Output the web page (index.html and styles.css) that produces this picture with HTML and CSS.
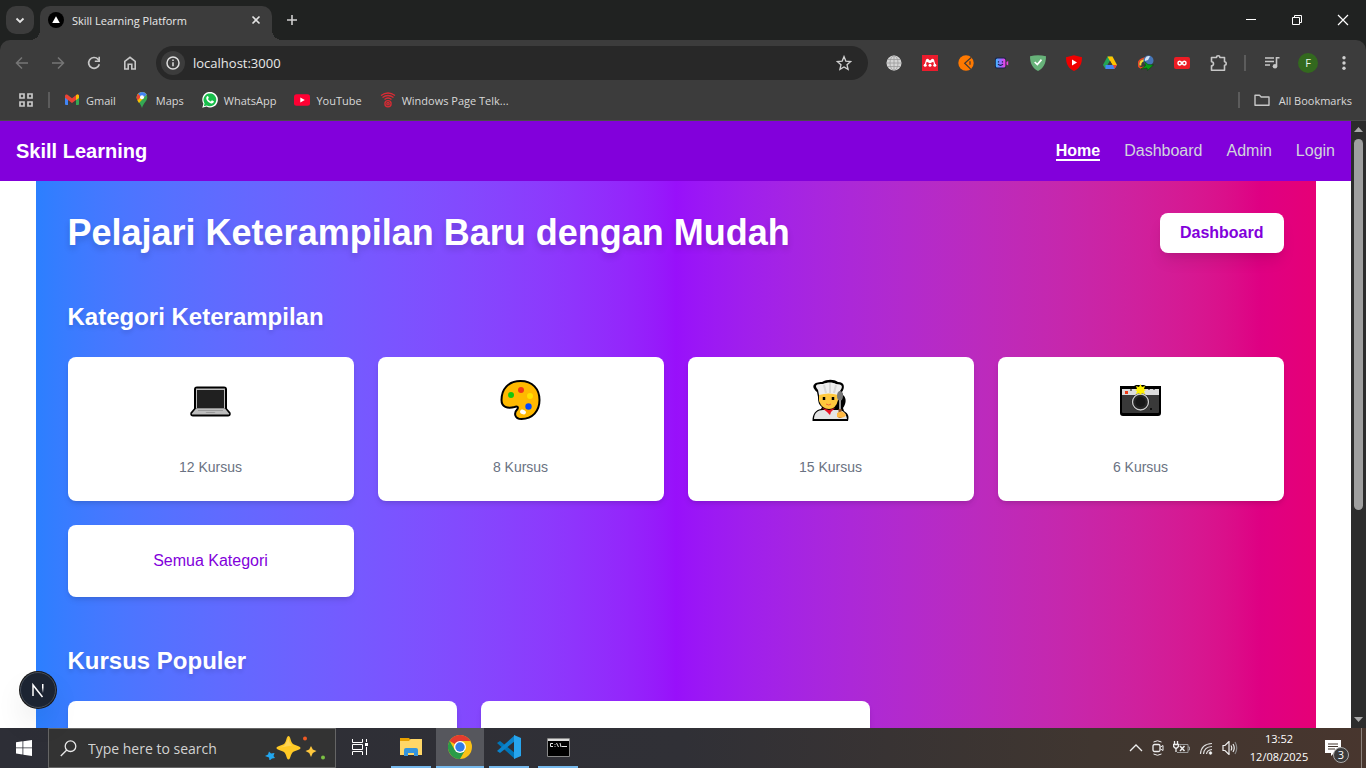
FILE: index.html
```html
<!DOCTYPE html>
<html lang="id">
<head>
<meta charset="utf-8">
<title>Skill Learning Platform</title>
<link rel="stylesheet" href="styles.css">
</head>
<body>
<div class="screen">
  <header class="browser">
    <div class="tabstrip">
      <button class="tab-search" aria-label="Search tabs"><svg width="12" height="12" viewBox="0 0 12 12"><path d="M2.500 4.500 6 8l3.500-3.500" fill="none" stroke="#e3e3e3" stroke-width="1.800"/></svg></button>
      <div class="tab">
        <svg width="16" height="16" viewBox="0 0 16 16"><circle cx="8" cy="8" r="8" fill="#000"/><path d="M8 4.300 11.800 11H4.200z" fill="#fff"/></svg>
        <span class="tab-title">Skill Learning Platform</span>
        <button class="plain" aria-label="Close tab"><svg width="16" height="16" viewBox="0 0 16 16"><path d="m4.500 4.500 7 7m0-7-7 7" stroke="#e3e3e3" stroke-width="1.600"/></svg></button>
      </div>
      <button class="plain new-tab" aria-label="New tab"><svg width="16" height="16" viewBox="0 0 16 16"><path d="M8 3v10M3 8h10" stroke="#d0d0d0" stroke-width="1.600"/></svg></button>
      <div class="window-controls">
        <button aria-label="Minimize"><svg width="12" height="12" viewBox="0 0 12 12"><path d="M1 5.500h10" stroke="#fff"/></svg></button>
        <button aria-label="Restore"><svg width="12" height="12" viewBox="0 0 12 12"><path d="M1.500 3.500h7v7h-7zM3.500 3.500v-2h7v7h-2" fill="none" stroke="#fff"/></svg></button>
        <button aria-label="Close"><svg width="12" height="12" viewBox="0 0 12 12"><path d="m1 1 10 10M11 1 1 11" stroke="#fff" stroke-width="1.200"/></svg></button>
      </div>
    </div>
    <div class="chrome-bars">
      <div class="toolbar">
        <button aria-label="Back"><svg width="16" height="16" viewBox="0 0 16 16"><path d="M14 8H3M8 2.500 2.500 8 8 13.500" fill="none" stroke="#767676" stroke-width="1.500"/></svg></button>
        <button aria-label="Forward"><svg width="16" height="16" viewBox="0 0 16 16"><path d="M2 8h11M8 2.500 13.500 8 8 13.500" fill="none" stroke="#767676" stroke-width="1.500"/></svg></button>
        <button aria-label="Reload"><svg width="16" height="16" viewBox="0 0 16 16"><path d="M13.300 9.200A5.400 5.400 0 1 1 12 4.200l1 1.200" fill="none" stroke="#c7c7c7" stroke-width="1.700"/><path d="M14 1.800V7H8.800V5.500h3.600V1.800z" fill="#c7c7c7"/></svg></button>
        <button aria-label="Home"><svg width="16" height="16" viewBox="0 0 16 16"><path d="M2.800 14V6.300L8 2.300l5.200 4V14H9.800V9.200H6.200V14z" fill="none" stroke="#c7c7c7" stroke-width="1.600"/></svg></button>
        <div class="omnibox">
          <button class="site-info" aria-label="Site information"><svg width="16" height="16" viewBox="0 0 16 16"><circle cx="8" cy="8" r="6" fill="none" stroke="#dedede" stroke-width="1.500"/><path d="M8 7.200v4M8 4.600v1.500" stroke="#dedede" stroke-width="1.500"/></svg></button>
          <input type="text" aria-label="Address" value="localhost:3000">
          <button class="plain" aria-label="Bookmark this page"><svg width="16" height="16" viewBox="0 0 16 16"><path d="m8 1.600 1.800 4.500 4.900.4-3.700 3.200 1.100 4.700L8 11.900l-4.100 2.500L5 9.700 1.300 6.500l4.900-.4z" fill="none" stroke="#d0d0d0" stroke-width="1.300"/></svg></button>
        </div>
        <button aria-label="Web extension"><svg width="16" height="16" viewBox="0 0 16 16"><circle cx="8" cy="8" r="7.500" fill="#d4d4d4"/><path d="M8 .5v15M.5 8h15M2 4.500h12M2 11.500h12" stroke="#9a9a9a" stroke-width=".8"/><ellipse cx="8" cy="8" rx="4" ry="7.300" fill="none" stroke="#9a9a9a" stroke-width=".8"/></svg></button>
        <button aria-label="Mendeley"><svg width="16" height="16" viewBox="0 0 16 16"><path d="M0 0h16v16H0z" fill="#eb1c2d"/><path d="M3 10.300C3.800 9 3.500 6 5 5.500M13 10.300C12.200 9 12.500 6 11 5.500M6.200 6l1.300 2M9.800 6 8.500 8" fill="none" stroke="#fff" stroke-width="1.300"/><circle cx="5.500" cy="5.500" r="1.700" fill="#fff"/><circle cx="10.500" cy="5.500" r="1.700" fill="#fff"/><circle cx="8" cy="6.500" r="1.500" fill="#fff"/><circle cx="3.200" cy="10.300" r="1.500" fill="#fff"/><circle cx="8" cy="10.300" r="1.500" fill="#fff"/><circle cx="12.800" cy="10.300" r="1.500" fill="#fff"/></svg></button>
        <button aria-label="Code extension"><svg width="16" height="16" viewBox="0 0 16 16"><circle cx="8" cy="8" r="7.700" fill="#ff7900"/><path d="m13.500 2.200-6.800 6 6 6M12 6.300v3.500" fill="none" stroke="#403a35" stroke-width="1.200"/></svg></button>
        <button aria-label="Recorder"><svg width="16" height="16" viewBox="0 0 16 16"><defs><linearGradient id="rec"><stop stop-color="#3dbdff"/><stop offset=".6" stop-color="#a561ff"/><stop offset="1" stop-color="#f93ed6"/></linearGradient></defs><rect x="1" y="2.500" width="11" height="11" rx="2" fill="#17204d"/><rect x="1.800" y="3.500" width="9.600" height="9" rx="1.500" fill="url(#rec)"/><path d="m12.500 7 1.700-1v4.500l-1.700-1z" fill="#e847db"/><path d="M4.500 6.200v1.300M8.500 6.200v1.300M4 9.200q2.500 2.500 5 0" fill="none" stroke="#17204d" stroke-width="1.200"/></svg></button>
        <button aria-label="AdGuard"><svg width="16" height="16" viewBox="0 0 16 16"><path d="M0 1.300Q8-1 16 1.300C16 9 13 13.500 8 16 3 13.500 0 9 0 1.300z" fill="#67b279"/><path d="m4.700 7 2.600 2.600 4.200-5" fill="none" stroke="#fff" stroke-width="1.700"/></svg></button>
        <button aria-label="YouTube blocker"><svg width="16" height="16" viewBox="0 0 16 16"><path d="M0 2.200 8 .3l8 1.900C16 9 13.500 13.500 8 16 2.500 13.500 0 9 0 2.200z" fill="#f00000"/><path d="m6 4.500 5 3-5 3z" fill="#fff"/></svg></button>
        <button aria-label="Google Drive"><svg width="16" height="16" viewBox="0 0 16 16"><path d="M5.500 1.500h5L3.500 14 1 10z" fill="#23a455"/><path d="M5.500 1.500h5L15 10h-4.800z" fill="#ffc400"/><path d="M3.500 10H15l-2.500 4h-9z" fill="#4285f4"/><path d="m8 5.800 2.600 4.300H5.500z" fill="#3c3c3c"/><path d="M11 10h4l-2.500 4z" fill="#ea4335"/></svg></button>
        <button aria-label="Download manager"><svg width="16" height="16" viewBox="0 0 16 16"><path d="M7 3C2 4 0 7 .5 10.500 1 13 4 13.500 6 12" fill="none" stroke="#eb4926" stroke-width="1.600"/><path d="M7 5C3.500 5.500 2 8 2.300 10.500" fill="none" stroke="#f9dc36" stroke-width="2"/><circle cx="10.500" cy="5.500" r="5" fill="#4676b8"/><path d="M7 3.500Q9 .5 12 1.200L10 5 7 6z" fill="#d3e4f3"/><path d="m6.500 6.500 3.500 3 5.500.5-6 5.500-.5-2.500-6 1 4.500-3.500z" fill="#079c16" stroke="#073c08" stroke-width=".5"/></svg></button>
        <button aria-label="Loop extension"><svg width="16" height="16" viewBox="0 0 16 16"><rect y="2" width="16" height="12" rx="2" fill="#ed1c24"/><path d="M8 8C6.500 5.500 4 5.500 4 8s2.500 2.500 4 0 4-2.500 4 0-2.500 2.500-4 0z" fill="none" stroke="#fff" stroke-width="1.500"/></svg></button>
        <button aria-label="Extensions"><svg width="18" height="18" viewBox="0 0 18 18"><path d="M2.500 3.500h5a1.700 1.700 0 0 1 3.400 0h4.600v4.300a1.700 1.700 0 0 1 0 3.400v5h-13v-4.500a2 2 0 0 0 0-4z" fill="none" stroke="#c7c7c7" stroke-width="1.600" stroke-linejoin="round"/></svg></button>
        <span class="divider toolbar-divider"></span>
        <button aria-label="Media controls"><svg width="16" height="16" viewBox="0 0 16 16"><path d="M1 3h9M1 6.500h9M1 10h5M12.500 11V2.800h3" fill="none" stroke="#c7c7c7" stroke-width="1.600"/><circle cx="11" cy="11.200" r="2.300" fill="#c7c7c7"/></svg></button>
        <button aria-label="Profile"><span class="avatar">F</span></button>
        <button aria-label="Menu"><svg width="16" height="16" viewBox="0 0 16 16" fill="#d0d0d0"><circle cx="8" cy="2.700" r="1.700"/><circle cx="8" cy="8" r="1.700"/><circle cx="8" cy="13.300" r="1.700"/></svg></button>
      </div>
      <nav class="bookmarks" aria-label="Bookmarks">
        <button class="plain" aria-label="Apps"><svg width="16" height="16" viewBox="0 0 16 16" fill="none" stroke="#c7c7c7" stroke-width="1.700"><path d="M2 2h4v4H2zM10 2h4v4h-4zM2 10h4v4H2zM10 10h4v4h-4z"/></svg></button>
        <span class="divider"></span>
        <div class="bookmark-list">
          <a href="#"><svg width="16" height="16" viewBox="0 0 16 16"><path d="M1 3.500 4 5.800V13H2a1 1 0 0 1-1-1z" fill="#4285f4"/><path d="M15 3.500 12 5.800V13h2a1 1 0 0 0 1-1z" fill="#34a853"/><path d="M1 4c0-1.500 1.500-2 2.500-1.200L8 6.200l4.500-3.400C13.500 2 15 2.500 15 4v1.800L8 11 1 5.800z" fill="#ea4335"/><path d="M12 3.200c1.200-1.200 3-.6 3 .8v2l-3 2z" fill="#fbbc04"/></svg>Gmail</a>
          <a href="#"><svg width="16" height="16" viewBox="0 0 16 16"><path d="M8 0a5.300 5.300 0 0 1 5.300 5.300C13.300 9 9.500 11 8 16 6.500 11 2.700 9 2.700 5.300A5.300 5.300 0 0 1 8 0z" fill="#34a853"/><path d="M2.700 5.300C2.700 1.500 6 0 8 0c2.500 0 4 1.300 4.700 2.700L5 11C3.500 9 2.700 7 2.700 5.300z" fill="#fbbc04"/><path d="M8 0c2.500 0 4 1.300 4.700 2.700L8 7 4 2C5 .7 6.500 0 8 0z" fill="#4285f4"/><path d="m4 2 3 2.500-3.500 4C2 5.500 2.700 3.500 4 2z" fill="#ea4335"/><circle cx="8" cy="5.300" r="2" fill="#fff"/></svg>Maps</a>
          <a href="#"><svg width="16" height="16" viewBox="0 0 16 16"><path d="m.3 15.700 1.100-4A7.800 7.800 0 1 1 4.500 14.600z" fill="#fff"/><path d="m1.800 14.200.8-2.800a6.400 6.400 0 1 1 2.200 2z" fill="#18bd4b"/><path d="M5.200 4.200c.8-.6 1.300.7 1.600 1.600L6 6.900c.7 1.300 1.700 2.100 2.900 2.600l1-1.200 2 1c-.2 3-3.500 2.400-5.500.6C4.300 8 3.500 5.500 5.200 4.200z" fill="#fff"/></svg>WhatsApp</a>
          <a href="#"><svg width="16" height="16" viewBox="0 0 16 16"><rect y="2.300" width="16" height="11.400" rx="2.500" fill="#ff0033"/><path d="m6.300 5.500 4.500 2.500-4.500 2.500z" fill="#fff"/></svg>YouTube</a>
          <a href="#"><svg width="16" height="16" viewBox="0 0 16 16" fill="none" stroke="#d92b34" stroke-width="1.300"><path d="M1 3.500Q8-1.500 15 3.500M2.500 5.500q5.500-4 11 0M4.500 7.500q3.500-3 7 0"/><circle cx="8" cy="11.700" r="3.100"/><circle cx="8" cy="11.700" r="1.200"/></svg>Windows Page Telk...</a>
        </div>
        <span class="divider"></span>
        <a class="all-bookmarks" href="#"><svg width="16" height="16" viewBox="0 0 16 16"><path d="M1 3.200h4.500L7.200 5H15v8.200H1z" fill="none" stroke="#c7c7c7" stroke-width="1.400" stroke-linejoin="round"/></svg>All Bookmarks</a>
      </nav>
    </div>
  </header>

  <div class="viewport">
    <div class="page">
      <nav class="site-nav">
        <a class="brand" href="#">Skill Learning</a>
        <div class="site-links"><a class="active" href="#">Home</a><a href="#">Dashboard</a><a href="#">Admin</a><a href="#">Login</a></div>
      </nav>
      <main class="content">
        <div class="hero"><h1>Pelajari Keterampilan Baru dengan Mudah</h1><a class="cta" href="#">Dashboard</a></div>
        <section>
          <h2>Kategori Keterampilan</h2>
          <div class="categories">
            <a class="card" href="#">
              <svg width="42" height="42" viewBox="0 -1 42 42"><path d="M7 6.500h27q3 0 3 3v19l3.500 4q1 4-2.500 4H3q-3.500 0-2.500-4l3.500-4v-19q0-3 3-3z" fill="#000"/><path d="M6 8.500h29v20H6z" fill="#bdbdbd"/><path d="M7 10h27v18H7z" fill="#202020"/><path d="M6 28.500h29l4 5v1H2v-1z" fill="#bdbdbd"/><path d="M8 30h25v1H8z" fill="#999"/><path d="M16.500 32h8l1 1h-10z" fill="#999"/></svg>
              <span>12 Kursus</span></a>
            <a class="card" href="#">
              <svg width="42" height="42" viewBox="0 0 42 42"><path d="M20.500 2c12 0 19 8 19 19s-7 19-18 19c-7 0-8-6-4-10 1-2 0-3-3-2-7 2-13 0-13-7C1.500 10 8.500 2 20.500 2z" fill="#ffb900" stroke="#000" stroke-width="2"/><circle cx="11" cy="16" r="3" fill="#16c60c"/><circle cx="21" cy="11" r="3" fill="#f03a17"/><circle cx="30" cy="17" r="3" fill="#ffe000"/><circle cx="28.500" cy="27.500" r="3.200" fill="#0047ff"/><ellipse cx="23" cy="33" rx="3" ry="2.300" fill="#fff" transform="rotate(25 23 33)"/></svg>
              <span>8 Kursus</span></a>
            <a class="card" href="#">
              <svg width="42" height="42" viewBox="0 0 42 42"><path d="M8 18 7 13C0 7 4 3 12 3c5-3 12-3 16 0 7 0 7 6 4 10l1 3c4 3 3 9 0 13l1 3c5 3 5 6 4 10H2.500c0-7 3-11 8.500-12l1-2c-3-2-4-5-4-10z" fill="#000"/><path d="m9 16-1-5C4 6 6 5 13 5c4-2 10-2 13 0 7 0 7 3 4 7l-2 4z" fill="#eee"/><path d="m14 6 2 8M20 4v10M26 6l-2 8" stroke="#d7d7d7" stroke-width="2"/><path d="M9 16q10-3 19 0v5q-2 9-9 9t-10-8z" fill="#ffc83d"/><path d="M14 18v3M23 18v3" stroke="#000" stroke-width="2.500"/><path d="M16 25q3 2 5 0" fill="none" stroke="#ef6a37"/><path d="M4 40c0-6 4-9 9-9h15c5 0 8 3 9 9z" fill="#e4e4e4"/><path d="m12 29 7 2 6-2-4 4-1 3-3-3z" fill="#e81224"/><ellipse cx="30" cy="17" rx="3" ry="5" fill="#777"/><path d="M30 21v15" stroke="#999" stroke-width="2"/><path d="M30 30v9" stroke="#8e562e" stroke-width="3"/><path d="M27 34q6-4 9 2-2 4-9 2z" fill="#ffb943"/></svg>
              <span>15 Kursus</span></a>
            <a class="card" href="#">
              <svg width="42" height="42" viewBox="0 0 42 42"><path d="M0 7h14l2-1h8l2 1h15v27q0 3-3 3H3q-3 0-3-3z" fill="#000"/><path d="M2 10h37v6H2z" fill="#ddd"/><path d="M2 16h37v17q0 1-1 1H3q-1 0-1-1z" fill="#393939"/><path d="M5 12h3v3H5z" fill="#f03a17"/><path d="M11 9v3M29 8v3M34 8v3" stroke="#000"/><circle cx="20.500" cy="23" r="9" fill="#111"/><circle cx="20.500" cy="23" r="8" fill="#252525" stroke="#ccc" stroke-width="1.300"/><circle cx="20.500" cy="23" r="5" fill="#171717"/><path d="m20.500 5 1.500 3 3-1-1 3 2 1-2 1 1 3-3-1-1.500 2-1.500-2-3 1 1-3-2-1 2-1-1-3 3 1z" fill="#fff100"/><circle cx="31" cy="30" r="1" fill="#000"/></svg>
              <span>6 Kursus</span></a>
            <a class="card all-card" href="#">Semua Kategori</a>
          </div>
        </section>
        <section>
          <h2>Kursus Populer</h2>
          <div class="courses"><article class="card course"></article><article class="card course"></article></div>
        </section>
      </main>
    </div>
    <div class="scrollbar" aria-hidden="true">
      <svg width="9" height="5" viewBox="0 0 9 5"><path d="M4.500 0 9 5H0z" fill="#a8a8a8"/></svg>
      <div class="track"><div class="thumb"></div></div>
      <svg width="9" height="5" viewBox="0 0 9 5"><path d="M4.500 5 9 0H0z" fill="#a8a8a8"/></svg>
    </div>
    <button class="dev-badge" aria-label="Next.js Dev Tools"><svg width="16" height="16" viewBox="0 0 16 16"><defs><linearGradient id="fade" x2="0" y2="1"><stop offset=".4" stop-color="#fff"/><stop offset="1" stop-color="#fff" stop-opacity="0"/></linearGradient></defs><path d="M3 14V3L12.500 15" fill="none" stroke="#fff" stroke-width="1.500"/><path d="M12 2h1.500v9H12z" fill="url(#fade)"/></svg></button>
  </div>

  <footer class="taskbar">
    <button class="start" aria-label="Start"><svg width="16" height="16" viewBox="0 0 16 16" fill="#fff"><path d="m0 2.200 6.500-.9v6.200H0zM7.300 1.200 16 0v7.500H7.300zM0 8.300h6.500v6.200L0 13.600zM7.300 8.300H16V16l-8.700-1.300z"/></svg></button>
    <label class="search">
      <svg width="17" height="17" viewBox="0 0 17 17" fill="none" stroke="#e8e8e8" stroke-width="1.300"><circle cx="10.500" cy="6.200" r="5.300"/><path d="M6.800 10 .8 16"/></svg>
      <input type="text" aria-label="Search" placeholder="Type here to search">
      <svg width="60" height="24" viewBox="0 0 60 24"><path d="M23.500 0c2 0 2 5.500 4 7.500s8 2.500 8 4.500-6 2.500-8 4.500-2 7-4 7-2-5-4-7-8-2.500-8-4.500 6-2.500 8-4.500 2-7.500 4-7.500z" fill="#ffc925"/><path d="M23.500 2q1 6 3.500 7.500L12 12q6-1 8-3z" fill="#ffe078" opacity=".6"/><path d="m46 10 1.800 3.500L51.500 15l-3.700 2-1.800 4-1.800-4-3.700-2 3.700-1.500z" fill="#ffc83d"/><path d="m4 15.500 2 2 3.500-.5-1 3 1.500 2-3 .5-2.500 2-.5-3L0 20l3-1.500z" fill="#22a7f0"/><circle cx="40" cy="2.500" r="2" fill="#f15a24"/><circle cx="58" cy="21.500" r="2" fill="#7bc043"/></svg>
    </label>
    <button class="task" aria-label="Task View"><svg width="16" height="16" viewBox="0 0 16 16" fill="none" stroke="#fff"><path d="M.5 0v3.500h10V0M.5 5.500h10v5H.5zM.5 16v-3.500h10V16M14.500 0v3M14.500 8v8"/><path d="M13 4h3v3h-3z" fill="#fff" stroke="none"/></svg></button>
    <button class="task running" aria-label="File Explorer"><svg width="22" height="18" viewBox="0 0 22 18"><path d="M0 0h9l1.500 2H22v4H0z" fill="#e8a100"/><path d="M0 3h9l1.500-2H22v16H0z" fill="#ffd767"/><path d="M4 18v-6q0-2 2-2h10q2 0 2 2v6h-4v-3H8v3z" fill="#3595dc"/></svg></button>
    <button class="task running current" aria-label="Chrome"><svg width="24" height="24" viewBox="0 0 24 24"><circle cx="12" cy="12" r="12" fill="#fbc116"/><path d="M12 12 1.600 6A12 12 0 0 1 22.400 6H12z" fill="#e33b2e"/><path d="M1.600 6A12 12 0 0 0 12 24l5.200-9L12 12l-5.200 3z" fill="#2a9b48"/><circle cx="12" cy="12" r="6" fill="#fff"/><circle cx="12" cy="12" r="4.700" fill="#347ce9"/></svg></button>
    <button class="task running" aria-label="Visual Studio Code"><svg width="24" height="24" viewBox="0 0 24 24"><path d="m0 8 3-2 15 12v6z" fill="#0075b8"/><path d="m0 16 3 2L18 6V0z" fill="#0b83cc"/><path d="m17 0 7 3v18l-7 3z" fill="#27a5ee"/></svg></button>
    <button class="task running" aria-label="Command Prompt"><svg width="23" height="19" viewBox="0 0 23 19"><path d="M.5.5h22v18H.5z" fill="#000" stroke="#898989"/><path d="M1 1h21v2H1z" fill="#ddd"/><path d="M6 5.500H3.500v3H6M8 6v.8M8 8v.8M9.500 5l2 4M13 5l1 4M14.500 8.500H20" fill="none" stroke="#e5e5e5"/></svg></button>
    <div class="tray">
      <svg width="14" height="8" viewBox="0 0 14 8"><path d="m1 7 6-6 6 6" fill="none" stroke="#eee" stroke-width="1.300"/></svg>
      <svg width="12" height="16" viewBox="0 0 12 16" fill="none" stroke="#eee"><path d="M1.500 2q4-2.500 8 0M1.500 14q4 2.500 8 0"/><rect x="1" y="4.500" width="7" height="7" rx="1.500" stroke-width="1.300"/><path d="m8.500 7 2.500-1.500v5L8.500 9"/></svg>
      <svg width="17" height="14" viewBox="0 0 17 14" fill="none" stroke="#eee"><path d="M1.500 0v3m3-3v3M.5 3.500h5v2q-2 2-2.500 2t-2.500-2zM3 8v3" stroke-width="1.300"/><path d="M6 3.500h9v8H4M15 6h1.500v3H15" stroke="#999"/><path d="m7 5 4.500 5m0-5L7 10" stroke-width="1.500"/></svg>
      <svg width="14" height="14" viewBox="0 0 14 14" fill="none" stroke="#ddd"><path d="M1.500 13Q2 3 13 2.500M4.500 13Q5 6 13 5.500M7.500 13q.5-4 5.500-4.500" stroke-width="1.200"/><circle cx="11.500" cy="12" r="1.300" fill="#fff"/></svg>
      <svg width="16" height="14" viewBox="0 0 16 14" fill="none" stroke="#eee" stroke-width="1.200"><path d="M1 4.500h2l4-4v13l-4-4H1zM9 4.500q1.500 2.500 0 5M11 3q2.500 4 0 8"/><path d="M13 1q3.500 6 0 12" stroke="#888"/></svg>
      <time class="clock"><span>13:52</span><span>12/08/2025</span></time>
      <button class="notifications" aria-label="3 notifications"><svg width="16" height="16" viewBox="0 0 16 16"><path d="M0 0h16v13H9l-3 3v-3H0z" fill="#fff"/><path d="M3 4h10M3 6.500h10M3 9h7" stroke="#43362f"/></svg><span class="count">3</span></button>
      <span class="show-desktop"></span>
    </div>
  </footer>
</div>
</body>
</html>
```
FILE: styles.css
```css
* { box-sizing: border-box; }
body { margin: 0; font-family: "Liberation Sans", Arial, sans-serif; }
a { color: inherit; text-decoration: none; }
button { border: 0; padding: 0; margin: 0; background: none; color: inherit; font: inherit; display: flex; align-items: center; justify-content: center; flex-shrink: 0; }
input { font: inherit; color: inherit; background: none; border: 0; padding: 0; outline: 0; min-width: 0; }
svg { display: block; flex-shrink: 0; }
h1, h2 { margin: 0; }

.screen { height: 100vh; display: flex; flex-direction: column; overflow: hidden; }

/* Browser window */
.browser { background: #202221; color: #d8d8d8; font-family: "Open Sans", "Noto Sans", sans-serif; font-size: 11px; flex-shrink: 0; }
.tabstrip { height: 40px; display: flex; padding-left: 6px; }
.tab-search { width: 28px; height: 28px; margin: 6px 6px 0 0; border-radius: 10px; background: #3c3c3c; }
.tab { position: relative; width: 232px; margin-top: 6px; padding: 0 8px 6px; display: flex; align-items: center; gap: 8px; background: #3c3c3c; border-radius: 10px 10px 0 0; color: #e8e8e8; }
.tab::before, .tab::after { content: ""; position: absolute; bottom: 0; width: 10px; height: 10px; }
.tab::before { right: 100%; background: radial-gradient(circle at 0 0, transparent 10px, #3c3c3c 10px); }
.tab::after { left: 100%; background: radial-gradient(circle at 100% 0, transparent 10px, #3c3c3c 10px); }
.tab-title { flex: 1; white-space: nowrap; }
.new-tab { margin-left: 12px; }
.window-controls { display: flex; margin-left: auto; }
.window-controls button { width: 46px; }
.chrome-bars { background: #3c3c3c; border-radius: 10px 10px 0 0; border-bottom: 1px solid #4a4a4a; }
.toolbar { height: 46px; display: flex; align-items: center; padding: 0 4px; }
.toolbar > button { width: 36px; height: 34px; }
.omnibox { flex: 1; height: 34px; margin: 0 8px; padding: 0 16px 0 5px; border-radius: 17px; background: #282828; display: flex; align-items: center; gap: 8px; color: #e8e8e8; font-size: 13px; }
.omnibox input { flex: 1; }
.site-info { width: 24px; height: 24px; border-radius: 12px; background: #3c3c3c; }
.divider { width: 2px; height: 16px; background: #5c5c5c; flex-shrink: 0; }
.toolbar-divider { margin: 0 8px; }
.avatar { width: 20px; height: 20px; border-radius: 10px; background: #33691e; color: #e8f5e9; line-height: 20px; }
.bookmarks { height: 34px; display: flex; align-items: center; padding: 0 14px 6px 18px; gap: 14px; }
.bookmark-list { flex: 1; display: flex; gap: 18px; white-space: nowrap; }
.bookmarks a { display: flex; align-items: center; gap: 6px; }
.bookmarks .all-bookmarks { gap: 9px; }

/* Web page */
.viewport { position: relative; flex: 1; min-height: 0; display: flex; background: #fff; }
.page { flex: 1; overflow: hidden; }
.site-nav { background: #8200db; color: #fff; padding: 16px; display: flex; align-items: center; justify-content: space-between; }
.brand { font-size: 20px; line-height: 28px; font-weight: 700; }
.site-links { display: flex; gap: 24px; line-height: 16px; color: #d1d5dc; }
.site-links a { padding-top: 2px; border-bottom: 2px solid transparent; }
.site-links .active { color: #fff; font-weight: 700; border-color: #fff; }
.content { max-width: 1280px; margin: 0 auto; padding: 32px; background: linear-gradient(to right in oklab, oklch(62.3% 0.214 259.815), oklch(55.8% 0.288 302.321), oklch(59.2% 0.249 0.584)); }
.hero { display: flex; align-items: center; justify-content: space-between; margin-bottom: 48px; }
h1 { font-size: 36px; line-height: 40px; color: #fff; text-shadow: 0 4px 6px rgba(0, 0, 0, .15); }
h2 { font-size: 24px; line-height: 32px; color: #fff; margin-bottom: 24px; text-shadow: 0 3px 4px rgba(0, 0, 0, .12); }
.cta { padding: 8px 20px; border-radius: 8px; background: #fff; color: #8200db; font-weight: 700; line-height: 24px; box-shadow: 0 10px 15px -3px rgba(0, 0, 0, .1), 0 4px 6px -4px rgba(0, 0, 0, .1); }
section { margin-bottom: 48px; }
.categories { display: grid; grid-template-columns: repeat(4, 1fr); gap: 24px; }
.courses { display: grid; grid-template-columns: repeat(3, 1fr); gap: 24px; }
.card { display: flex; flex-direction: column; align-items: center; justify-content: space-between; padding: 22px 24px 24px; border-radius: 8px; background: #fff; box-shadow: 0 4px 6px -1px rgba(0, 0, 0, .1), 0 2px 4px -2px rgba(0, 0, 0, .1); }
.categories .card { min-height: 144px; }
.card span { font-size: 14px; line-height: 20px; color: #6a7282; }
.categories .all-card { min-height: 72px; padding: 24px; color: #8200db; line-height: 24px; }
.course { min-height: 240px; }
.scrollbar { width: 15px; background: #2c2c2c; padding: 6px 0; display: flex; flex-direction: column; align-items: center; gap: 7px; }
.track { flex: 1; width: 9px; }
.thumb { height: 65%; border-radius: 5px; background: #9f9f9f; }
.dev-badge { position: absolute; left: 20px; bottom: 20px; width: 36px; height: 36px; border-radius: 18px; background: #1c2432; border: 1px solid #454d59; box-shadow: 0 0 0 1px #171717, 0 16px 32px -8px rgba(0, 0, 0, .24); }

/* Windows taskbar */
.taskbar { height: 40px; flex-shrink: 0; display: flex; background: linear-gradient(90deg, #2d2e36, #303036 50%, #403630 80%, #48362e); color: #fff; font-family: "Open Sans", "Noto Sans", sans-serif; }
.start { width: 48px; }
.search { width: 288px; border: 1px solid #656565; background: #333; display: flex; align-items: center; gap: 11px; padding: 0 10px 0 11px; font-size: 14px; color: #d2d2d2; }
.search input { flex: 1; }
.search input::placeholder { color: #d2d2d2; opacity: 1; }
.task { width: 48px; margin-right: 2px; border-bottom: 2px solid transparent; }
.running { width: 40px; margin: 0 4px 0 5px; border-color: #76b9ed; }
.current { width: 48px; margin: 0 0 0 1px; background: #56575d; }
.tray { margin-left: auto; display: flex; align-items: center; gap: 9px; }
.clock { width: 64px; display: flex; flex-direction: column; align-items: center; font-size: 11px; line-height: 18px; }
.notifications { position: relative; margin: 0 11px 0 5px; }
.count { position: absolute; left: 8px; top: 7px; width: 16px; height: 16px; border: 1px solid #aaa; border-radius: 8px; background: #3b3b3b; font-size: 11px; line-height: 14px; }
.show-desktop { width: 5px; align-self: stretch; border-left: 1px solid #8b817c; }
```
